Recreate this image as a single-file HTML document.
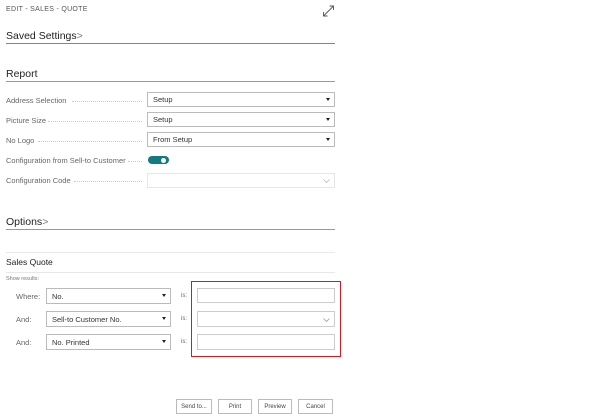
<!DOCTYPE html>
<html><head><meta charset="utf-8"><style>
*{margin:0;padding:0;box-sizing:border-box}
body{width:600px;height:420px;background:#fff;position:relative;font-family:"Liberation Sans",sans-serif;color:#333;overflow:hidden}
.a{position:absolute;white-space:nowrap}
.lbl{font-size:7.5px;color:#666}
.dots{position:absolute;border-bottom:1px dotted #ccc;height:0}
.box{position:absolute;border:1px solid #bbb;background:#fff;font-size:7.5px;color:#333;padding-left:5px;display:flex;align-items:center}
.tri{position:absolute;right:4px;top:50%;margin-top:-2px;width:0;height:0;border-left:2px solid transparent;border-right:2px solid transparent;border-top:3.5px solid #222}
.h{font-size:10.5px;color:#222}
.btn{position:absolute;top:399px;height:15px;border:1px solid #bbb;font-size:6px;color:#444;display:flex;align-items:center;justify-content:center}
</style></head><body>
<div class="a" style="left:6px;top:6px;font-size:7px;color:#555;letter-spacing:.3px">EDIT - SALES - QUOTE</div>
<svg class="a" style="left:322px;top:5px" width="13" height="12" viewBox="0 0 13 12"><path d="M1.5 11 L11.5 1 M7.5 1 H11.5 V5 M1.5 7 V11 H5.5" stroke="#555" stroke-width="0.9" fill="none"/></svg>
<div class="a h" style="left:6px;top:30px">Saved Settings<span style="color:#777">&gt;</span></div>
<div class="a" style="left:6px;top:43px;width:329px;height:1px;background:#6688bb"></div>
<div class="a h" style="left:6px;top:68px">Report</div>
<div class="a" style="left:6px;top:81px;width:329px;height:1px;background:#999"></div>

<div class="a lbl" style="left:6px;top:96px">Address Selection</div><div class="dots" style="left:72px;width:70px;top:101px"></div>
<div class="box" style="left:147px;top:92px;width:188px;height:15px">Setup<span class="tri"></span></div>
<div class="a lbl" style="left:6px;top:116px">Picture Size</div><div class="dots" style="left:48px;width:94px;top:121px"></div>
<div class="box" style="left:147px;top:112px;width:188px;height:15px">Setup<span class="tri"></span></div>
<div class="a lbl" style="left:6px;top:136px">No Logo</div><div class="dots" style="left:38px;width:104px;top:141px"></div>
<div class="box" style="left:147px;top:132px;width:188px;height:15px">From Setup<span class="tri"></span></div>
<div class="a lbl" style="left:6px;top:156px">Configuration from Sell-to Customer</div><div class="dots" style="left:128px;width:14px;top:161px"></div>
<div class="a" style="left:148px;top:156px;width:21px;height:8px;border-radius:4px;background:#137a7f"></div>
<div class="a" style="left:161px;top:157.5px;width:5px;height:5px;border-radius:50%;background:#fff"></div>
<div class="a lbl" style="left:6px;top:176px">Configuration Code</div><div class="dots" style="left:74px;width:68px;top:181px"></div>
<div class="box" style="left:147px;top:173px;width:188px;height:15px;border-color:#e6e6e6"><svg class="a" style="right:4px;top:5px" width="7" height="4"><path d="M0.5 0.5 L3.5 3.5 L6.5 0.5" stroke="#bbb" fill="none" stroke-width="0.8"/></svg></div>

<div class="a h" style="left:6px;top:216px">Options<span style="color:#777">&gt;</span></div>
<div class="a" style="left:6px;top:229px;width:329px;height:1px;background:#999"></div>
<div class="a" style="left:6px;top:252px;width:329px;height:1px;background:#e8e8e8"></div>
<div class="a" style="left:6px;top:257px;font-size:8.5px;color:#222">Sales Quote</div>
<div class="a" style="left:6px;top:272px;width:329px;height:1px;background:#e8e8e8"></div>
<div class="a" style="left:6px;top:276px;font-size:5.5px;color:#777">Show results:</div>

<div class="a lbl" style="left:16px;top:292px">Where:</div>
<div class="box" style="left:46px;top:288px;width:125px;height:16px">No.<span class="tri"></span></div>
<div class="a lbl" style="left:16px;top:315px">And:</div>
<div class="box" style="left:46px;top:311px;width:125px;height:16px">Sell-to Customer No.<span class="tri"></span></div>
<div class="a lbl" style="left:16px;top:338px">And:</div>
<div class="box" style="left:46px;top:334px;width:125px;height:16px">No. Printed<span class="tri"></span></div>
<div class="a lbl" style="left:181px;top:293px;font-size:6px">is:</div>
<div class="a lbl" style="left:181px;top:316px;font-size:6px">is:</div>
<div class="a lbl" style="left:181px;top:339px;font-size:6px">is:</div>
<div class="a" style="left:191px;top:281px;width:150px;height:76px;border:1.5px solid #c8202a"></div>
<div class="box" style="left:197px;top:288px;width:138px;height:15px;border-color:#ccc"></div>
<div class="box" style="left:197px;top:311px;width:138px;height:16px;border-color:#ccc"><svg class="a" style="right:4px;top:6px" width="7" height="4"><path d="M0.5 0.5 L3.5 3.5 L6.5 0.5" stroke="#999" fill="none" stroke-width="0.8"/></svg></div>
<div class="box" style="left:197px;top:334px;width:138px;height:16px;border-color:#ccc"></div>

<div class="btn" style="left:176px;width:36px">Send to...</div>
<div class="btn" style="left:218px;width:34px">Print</div>
<div class="btn" style="left:258px;width:34px">Preview</div>
<div class="btn" style="left:298px;width:35px">Cancel</div>
</body></html>
